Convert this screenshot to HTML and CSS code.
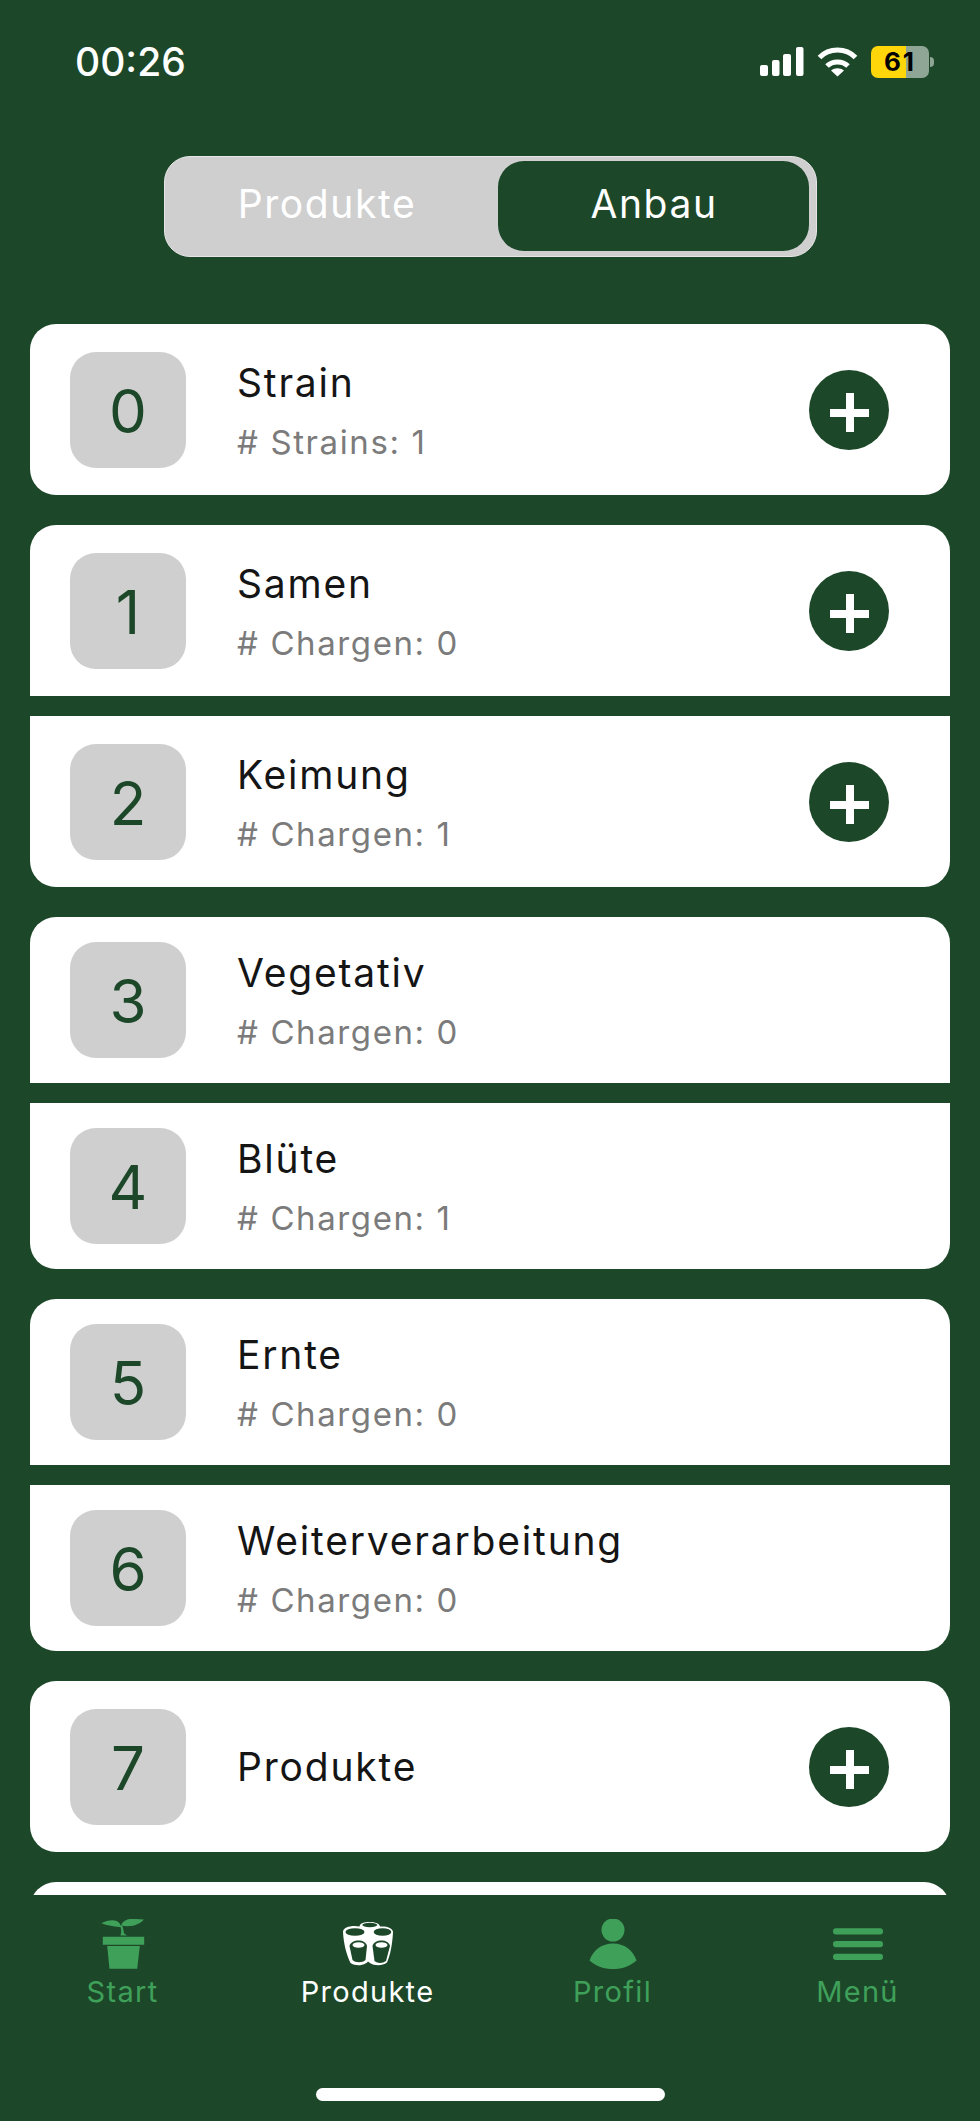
FILE: index.html
```html
<!DOCTYPE html>
<html lang="de">
<head>
<meta charset="utf-8">
<title>Anbau</title>
<link rel="stylesheet" href="styles.css">
</head>
<body>
<div class="screen">
  <header class="status">
    <span class="time">00:26</span>
    <div class="status-icons">
      <svg class="sig" viewBox="0 0 44 30" width="44" height="30"><rect x="0" y="18" width="8" height="11" rx="2"/><rect x="12" y="13" width="7.500" height="16" rx="2"/><rect x="23" y="7" width="8" height="22" rx="2"/><rect x="36" y="0" width="7.500" height="29" rx="2"/></svg>
      <svg class="wifi" viewBox="0 0 41 30" width="41" height="30"><path class="wifi-arc" d="M2.500 10.500C12 .5 29 .5 38.500 10.500"/><path class="wifi-arc" d="M10 19C15.500 13.500 25.500 13.500 31 19"/><path class="wifi-dot" d="M14 23.500C18 20.500 23 20.500 27 23.500L20.500 29.500Z"/></svg>
      <div class="batt"><div class="batt-body"><span class="batt-num">61</span></div><i class="batt-tip"></i></div>
    </div>
  </header>
  <div class="seg-wrap">
    <div class="seg">
      <div class="seg-item seg-off">Produkte</div>
      <div class="seg-item seg-on">Anbau</div>
    </div>
  </div>
  <main class="list">
    <section class="group">
      <article class="card tall"><div class="badge">0</div><div class="info"><div class="title">Strain</div><div class="sub"># Strains: 1</div></div><button class="add"><i></i></button></article>
    </section>
    <section class="group">
      <article class="card tall top"><div class="badge">1</div><div class="info"><div class="title">Samen</div><div class="sub"># Chargen: 0</div></div><button class="add"><i></i></button></article>
      <article class="card tall bottom"><div class="badge">2</div><div class="info"><div class="title">Keimung</div><div class="sub"># Chargen: 1</div></div><button class="add"><i></i></button></article>
    </section>
    <section class="group">
      <article class="card top"><div class="badge">3</div><div class="info"><div class="title">Vegetativ</div><div class="sub"># Chargen: 0</div></div></article>
      <article class="card bottom"><div class="badge">4</div><div class="info"><div class="title">Blüte</div><div class="sub"># Chargen: 1</div></div></article>
    </section>
    <section class="group">
      <article class="card top"><div class="badge">5</div><div class="info"><div class="title">Ernte</div><div class="sub"># Chargen: 0</div></div></article>
      <article class="card bottom"><div class="badge">6</div><div class="info"><div class="title">Weiterverarbeitung</div><div class="sub"># Chargen: 0</div></div></article>
    </section>
    <section class="group">
      <article class="card tall"><div class="badge">7</div><div class="info"><div class="title">Produkte</div></div><button class="add"><i></i></button></article>
    </section>
    <section class="group">
      <article class="card tall"></article>
    </section>
  </main>
  <nav class="tabs">
    <a class="tab">
      <svg viewBox="7.500 9 50 52" width="50" height="52"><path d="M12.300 26.700H53.700V34.700H12.300Z"/><path d="M16.700 36H49.300L46.700 58.700H19Z"/><path d="M11 13.300C16 10.500 22 9.500 26 11C28.500 12 30 14 30.500 17C25.500 17 18 16 11 13.300Z"/><path d="M53.500 9.500C47 9.500 41 8 37 9.500C33 11 31 13 30.800 15.500C35 16.500 41 16.500 45 15C49 13.500 51 12 53.500 9.500Z"/><path d="M29.500 16C31 19 31 22 30 25.500H36.500C35 24.500 34 24 33.500 23C33 20 32.500 17 31.500 15Z"/></svg>
      <span>Start</span>
    </a>
    <a class="tab tab-on">
      <svg viewBox="10.500 4 50 52" width="50" height="52"><path class="cup" d="M10.500 17C10.500 13 16 11 22 11L27 11.500C27.500 8 32 7 37 7C43 7 47 8.500 47.500 11.500C54 11 60.500 13 60.500 17C60 28 58 40 54.500 47.500C50 51 42 51 37.500 48L35.500 46.500C33 50 24 52 18 48C14 40 11 28 10.500 17Z"/><ellipse class="hole" cx="22.500" cy="17" rx="9.500" ry="3.800"/><ellipse class="hole" cx="50" cy="17" rx="8.800" ry="3.800"/><ellipse class="hole" cx="37.300" cy="10" rx="7.500" ry="2.200"/><path class="hole" d="M17 31C17.500 27.500 22 25.500 26 25.500C30 25.500 34 27.500 34.500 31L33 45C30 48 23 48 20 45Z"/><path class="hole" d="M40 31C40.500 27.500 45 25.500 49 25.500C53 25.500 57 27.500 57.500 31L53.500 46C50 48.500 45 48.500 42 46Z"/><ellipse class="cup" cx="26" cy="30" rx="6" ry="2.800"/><ellipse class="cup" cx="49" cy="30" rx="6" ry="2.800"/></svg>
      <span>Produkte</span>
    </a>
    <a class="tab">
      <svg viewBox="0 0 50 52" width="50" height="52"><circle cx="25" cy="11" r="11.500"/><path d="M1.500 41.500C5 31 14 24.500 25 24.500S45 31 48.500 41.500C42 47.500 34 50 25 50S8 47.500 1.500 41.500Z"/></svg>
      <span>Profil</span>
    </a>
    <a class="tab">
      <svg viewBox="0 0 50 52" width="50" height="52"><rect x="0" y="9.300" width="50" height="6.300" rx="3"/><rect x="0" y="22" width="50" height="6.300" rx="3"/><rect x="0" y="34.700" width="50" height="6.300" rx="3"/></svg>
      <span>Menü</span>
    </a>
  </nav>
  <div class="home"><i></i></div>
</div>
</body>
</html>
```
FILE: styles.css
```css
* { box-sizing: border-box; }
html, body { margin: 0; padding: 0; }
body { background: #1c4829; font-family: Inter, "Liberation Sans", sans-serif; }
.screen { width: 980px; height: 2121px; display: flex; flex-direction: column; overflow: hidden; background: #1c4829; }

.status { height: 156px; flex: none; padding: 42px 46px 0 75px; display: flex; justify-content: space-between; align-items: flex-start; }
.time { font-size: 39px; line-height: 40px; font-weight: 500; color: #fff; }
.status-icons { display: flex; align-items: center; gap: 13px; padding-top: 4px; }
.sig { fill: #fff; }
.wifi-arc { fill: none; stroke: #fff; stroke-width: 5; }
.wifi-dot { fill: #fff; }
.batt { display: flex; align-items: center; gap: 1px; }
.batt-body { width: 58px; height: 32px; border-radius: 7px; background: linear-gradient(90deg, #ffd60a 0 60%, #8fa595 60%); display: flex; align-items: center; justify-content: center; }
.batt-num { font-size: 26px; font-weight: 700; color: #000; line-height: 32px; letter-spacing: 2px; }
.batt-tip { width: 4px; height: 10px; background: #8fa595; border-radius: 0 4px 4px 0; }

.seg-wrap { flex: none; height: 168px; display: flex; justify-content: center; align-items: flex-start; }
.seg { width: 653px; height: 101px; background: #cfcfcf; border: 1px solid #e6e6e6; border-radius: 26px; padding: 4px 7px 5px 0; display: flex; }
.seg-item { flex: 1; display: flex; align-items: center; justify-content: center; padding-bottom: 6px; color: #fff; font-size: 39px; letter-spacing: 1.600px; border-radius: 26px; }
.seg-off { padding-right: 8px; }
.seg-on { flex: none; width: 311px; padding-left: 2px; background: #1c4829; }

.list { flex: none; height: 1571px; overflow: hidden; padding: 0 30px; display: flex; flex-direction: column; gap: 30px; }
.group { display: flex; flex-direction: column; gap: 20px; flex: none; }
.card { flex: none; height: 166px; background: #fff; border-radius: 26px; padding: 0 61px 0 40px; display: flex; align-items: center; }
.card.tall { height: 171px; }
.card.top { border-radius: 26px 26px 0 0; }
.card.bottom { border-radius: 0 0 26px 26px; }
.badge { flex: none; width: 116px; height: 116px; padding-top: 2px; border-radius: 26px; background: #cfcfcf; color: #1c4829; font-size: 60px; display: flex; align-items: center; justify-content: center; }
.info { flex: 1; margin-left: 51px; display: flex; flex-direction: column; }
.title { padding-top: 1px; font-size: 39px; line-height: 42px; letter-spacing: 1.800px; color: #151515; }
.sub { font-size: 33px; line-height: 38px; letter-spacing: 1.600px; color: #7b7b7b; margin: 19px 0 -2px; }
.add { flex: none; width: 80px; height: 80px; padding: 0; border: 0; border-radius: 50%; background: #1c4829; position: relative; }
.add i { position: absolute; left: 21px; top: 39px; width: 39px; height: 8px; background: #fff; }
.add i::after { content: ""; position: absolute; left: 15.500px; top: -15.500px; width: 8px; height: 39px; background: #fff; }

.tabs { flex: none; height: 166px; display: grid; grid-template-columns: repeat(4, 245px); padding-top: 24px; }
.tab { display: flex; flex-direction: column; align-items: center; color: #3fa05a; font-size: 29px; letter-spacing: 1.300px; fill: #3fa05a; }
.tab span { line-height: 34px; margin-top: 4px; }
.tab-on { color: #fff; }
.cup { fill: #fff; }
.hole { fill: #1c4829; }
.home { flex: 1; display: flex; justify-content: center; padding-top: 27px; }
.home i { width: 349px; height: 13px; border-radius: 7px; background: #fff; }
```
